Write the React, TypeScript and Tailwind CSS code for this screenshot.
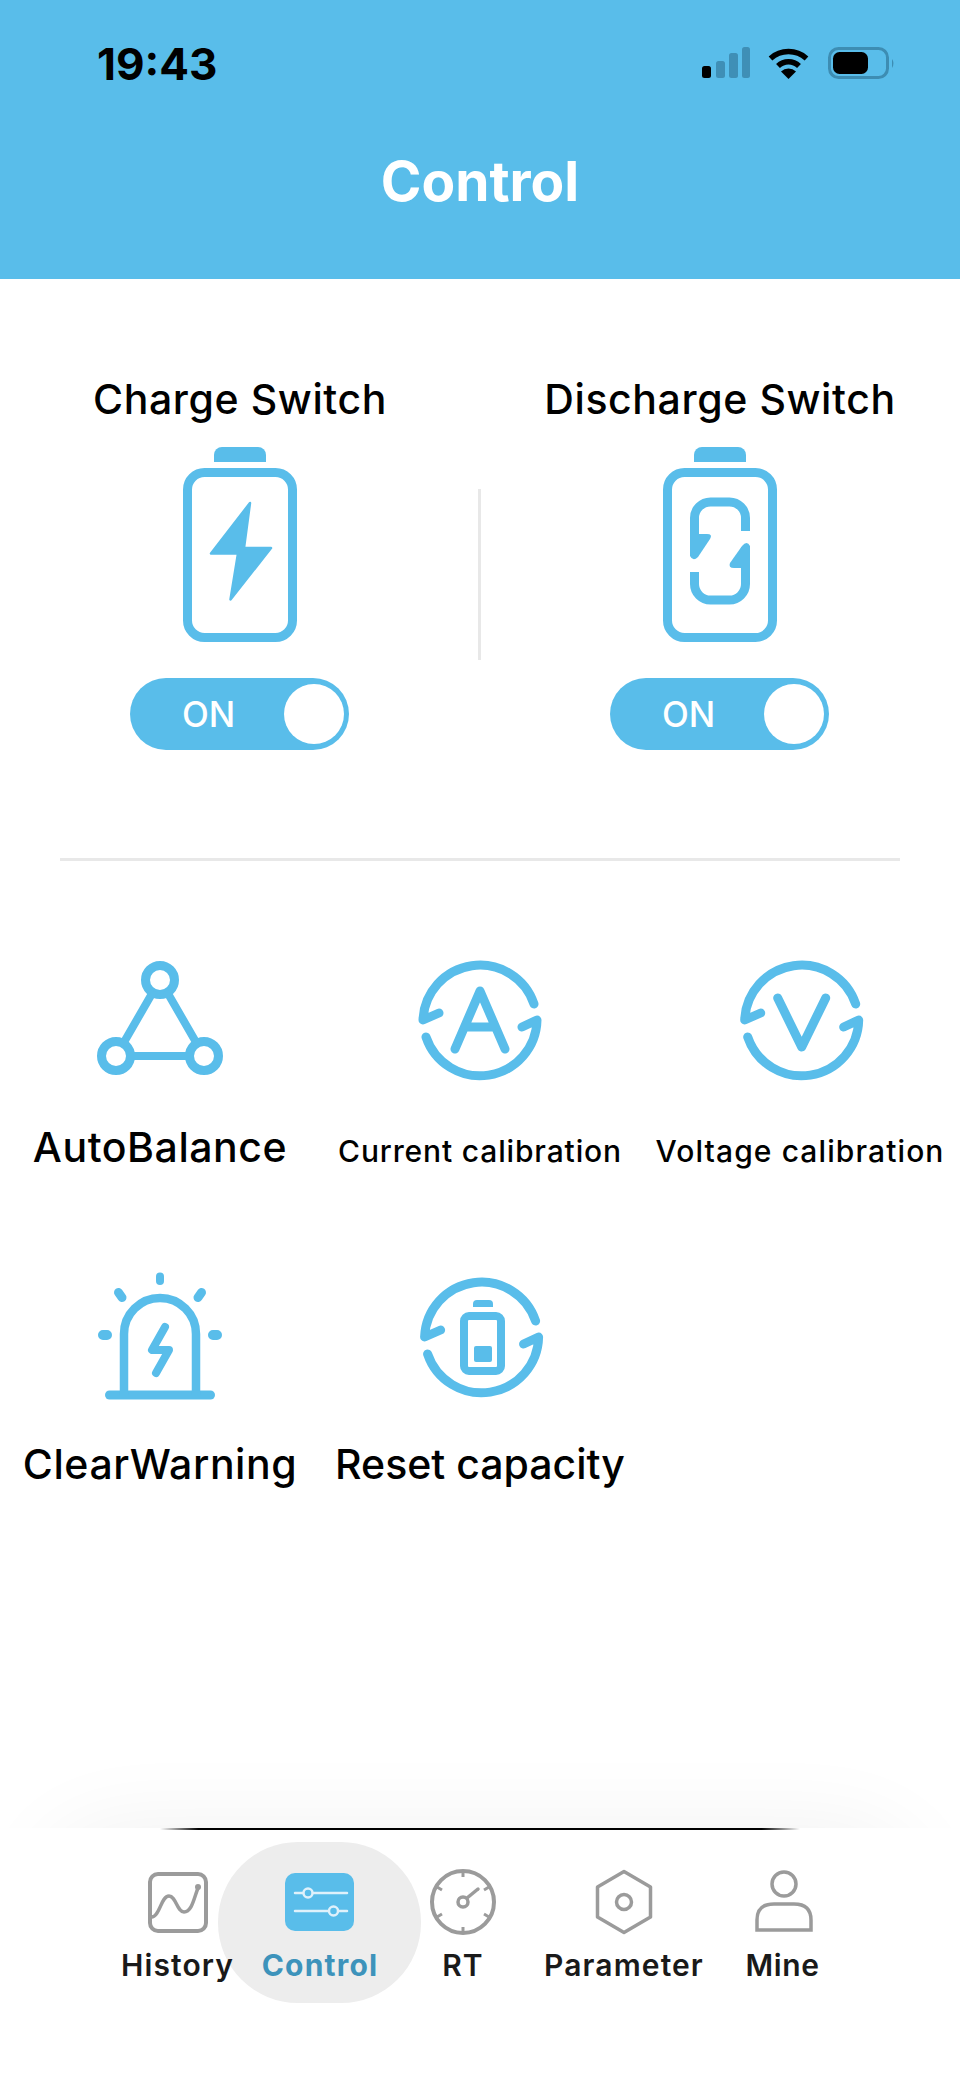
import React from "react";

const BLUE = "#59bdea";
const GRAY = "#9b9b9b";

function BatteryShell({ children }: { children?: React.ReactNode }) {
  return (
    <svg width="114" height="195" viewBox="0 0 114 195" fill="none">
      <path d="M31 15V8a8 8 0 0 1 8-8h36a8 8 0 0 1 8 8v7Z" fill={BLUE} />
      <rect x="4.5" y="25.5" width="105" height="165" rx="17" stroke={BLUE} strokeWidth="9" />
      {children}
    </svg>
  );
}

function ChargeBattery() {
  return (
    <BatteryShell>
      <path
        d="M67 56 L28 106.5 H55 L47.5 152.5 L88 101 H61 Z"
        fill={BLUE}
        stroke={BLUE}
        strokeWidth="2.5"
        strokeLinejoin="round"
      />
    </BatteryShell>
  );
}

function DischargeBattery() {
  return (
    <BatteryShell>
      <path
        d="M82.5 84 V71 A16 16 0 0 0 66.5 55 H47.5 A16 16 0 0 0 31.5 71 V108"
        stroke={BLUE}
        strokeWidth="9"
      />
      <path d="M36 87 H44 Q50 87 47 92 L35 110 Q30 115 27 109 V87 Z" fill={BLUE} />
      <path
        d="M31.5 125 V137 A16 16 0 0 0 47.5 153 H66.5 A16 16 0 0 0 82.5 137 V100"
        stroke={BLUE}
        strokeWidth="9"
      />
      <path d="M78 121 H71 Q65 121 67 116 L79 99 Q84 93 87 99 V121 Z" fill={BLUE} />
    </BatteryShell>
  );
}

function Toggle() {
  return (
    <div className="mr-[1px] flex h-[72px] w-[219px] items-center rounded-full bg-[#59bdea] pl-[52px] pr-[5px]">
      <span className="flex-1 text-[35px] font-medium leading-none text-white">ON</span>
      <span className="h-[60px] w-[60px] rounded-full bg-white" />
    </div>
  );
}

function SwitchColumn({ title, children }: { title: string; children: React.ReactNode }) {
  return (
    <div className="flex flex-col items-center">
      <div className="h-[48px] whitespace-nowrap text-[41px] font-medium leading-[48px] tracking-[0.6px] text-black">
        {title}
      </div>
      <div className="mt-[24px]">{children}</div>
      <div className="mt-[36px]">
        <Toggle />
      </div>
    </div>
  );
}

function Svg130({ children }: { children: React.ReactNode }) {
  return (
    <svg
      width="130"
      height="130"
      viewBox="-65 -65 130 130"
      fill="none"
      stroke={BLUE}
      strokeWidth="9"
      strokeLinecap="round"
      strokeLinejoin="round"
    >
      {children}
    </svg>
  );
}

function Arcs({ dx = 0 }: { dx?: number }) {
  return (
    <g transform={`translate(${dx} 0)`}>
      <path d="M54 -16 A57 57 0 0 0 -57 0 L-41 -7" />
      <path d="M-54 17 A57 57 0 0 0 57 0 L42 7" />
    </g>
  );
}

function AutoBalanceIcon() {
  return (
    <Svg130>
      <circle cx="0" cy="-40" r="14.5" />
      <circle cx="-44" cy="36" r="14.5" />
      <circle cx="44" cy="36" r="14.5" />
      <path d="M-6.5 -29 L-37.5 24.8 M6.5 -29 L37.5 24.8 M-31 36 H31" strokeLinecap="butt" strokeWidth="8" />
    </Svg130>
  );
}

function CurrentIcon() {
  return (
    <Svg130>
      <Arcs />
      <path d="M-25 29 L0 -29 L25 29 M-14 7 H14" />
    </Svg130>
  );
}

function VoltageIcon() {
  return (
    <Svg130>
      <Arcs dx={1.7} />
      <path d="M-22.3 -22 L1.7 27 L25.7 -22" />
    </Svg130>
  );
}

function AlertIcon() {
  return (
    <Svg130>
      <path d="M-50.5 58 H50.5" />
      <path d="M-36 58 V-3 A36 36 0 0 1 36 -3 V58" strokeLinecap="butt" strokeWidth="8.5" />
      <path d="M0 -60.5 V-56" strokeWidth="8" />
      <path d="M-41.5 -44.5 L-38 -39.5 M41.5 -44.5 L38 -39.5" strokeWidth="9" />
      <path d="M-57 -2 H-53 M53 -2 H57" strokeWidth="10" />
      <path d="M5 -10 L-8 13 H9 L-4 36" strokeWidth="8" />
    </Svg130>
  );
}

function ResetIcon() {
  return (
    <Svg130>
      <Arcs dx={1.6} />
      <rect x="-16" y="-21" width="37" height="55" rx="5" strokeWidth="8" />
      <path d="M-7 -30 V-33 a4 4 0 0 1 4 -4 H9 a4 4 0 0 1 4 4 V-30 Z" fill={BLUE} stroke="none" />
      <rect x="-6" y="9" width="18" height="16" rx="2" fill={BLUE} stroke="none" />
    </Svg130>
  );
}

function Action({
  label,
  icon,
  labelClass,
}: {
  label: string;
  icon: React.ReactNode;
  labelClass: string;
}) {
  return (
    <div className="flex flex-col items-center">
      {icon}
      <div className={labelClass}>{label}</div>
    </div>
  );
}

const bigLabel = "mt-[38px] h-[48px] whitespace-nowrap text-[41px] font-medium leading-[48px] tracking-[0.55px] text-black";
const resetLabel = "mt-[38px] h-[48px] whitespace-nowrap text-[41px] font-medium leading-[48px] text-black";
const currentLabel =
  "mt-[38px] h-[48px] whitespace-nowrap pt-[4px] text-[30px] font-medium leading-[48px] tracking-[0.85px] text-black";
const voltageLabel =
  "mt-[38px] h-[48px] whitespace-nowrap pt-[4px] text-[30px] font-medium leading-[48px] tracking-[1.1px] text-black";

function TabSvg({ children }: { children: React.ReactNode }) {
  return (
    <svg
      width="72"
      height="70"
      viewBox="-36 -35 72 70"
      fill="none"
      stroke={GRAY}
      strokeWidth="3.5"
      strokeLinecap="round"
      strokeLinejoin="round"
    >
      {children}
    </svg>
  );
}

function HistoryIcon() {
  return (
    <TabSvg>
      <rect x="-28" y="-28" width="56" height="57" rx="8" strokeWidth="4" />
      <path d="M-26 15 C-18 14 -17 -6 -9 -6 C-2 -6 -1 10 6 10 C14 10 16 -4 20 -14" strokeWidth="3.5" />
      <circle cx="20" cy="-15" r="3" fill={GRAY} stroke="none" />
    </TabSvg>
  );
}

function ControlIcon() {
  return (
    <svg width="72" height="70" viewBox="-36 -35 72 70" fill="none">
      <rect x="-35" y="-29" width="69" height="58" rx="10" fill={BLUE} />
      <path d="M-25 -9 H27 M-25 9 H27" stroke="#dff1fb" strokeWidth="2.5" strokeLinecap="round" />
      <circle cx="-12" cy="-9" r="4.5" fill={BLUE} stroke="#dff1fb" strokeWidth="2.5" />
      <circle cx="13.5" cy="9" r="4.5" fill={BLUE} stroke="#dff1fb" strokeWidth="2.5" />
    </svg>
  );
}

function GaugeIcon() {
  return (
    <TabSvg>
      <circle cx="0" cy="0" r="31" strokeWidth="4" />
      <path d="M0 -31 V-25 M0 31 V25 M-26 -15 L-21 -12 M26 -15 L21 -12 M-26 15 L-21 12 M26 15 L21 12" strokeWidth="3" strokeLinecap="butt" />
      <circle cx="0" cy="0" r="5" strokeWidth="3.5" />
      <path d="M4 -4 L15 -13" strokeWidth="3.5" />
    </TabSvg>
  );
}

function HexIcon() {
  return (
    <TabSvg>
      <path d="M0 -30.5 L26.5 -15 V15 L0 30.5 L-26.5 15 V-15 Z" />
      <circle cx="0" cy="0" r="7.5" />
    </TabSvg>
  );
}

function MineIcon() {
  return (
    <TabSvg>
      <circle cx="0" cy="-18" r="12" />
      <path d="M-27 28 V18 Q-27 2 -10 2 H10 Q27 2 27 18 V28 Z" strokeLinejoin="miter" />
    </TabSvg>
  );
}

function Tab({
  label,
  icon,
  widthClass,
  labelClass,
}: {
  label: string;
  icon: React.ReactNode;
  widthClass: string;
  labelClass: string;
}) {
  return (
    <div className={`relative flex flex-col items-center ${widthClass}`}>
      {icon}
      <div className={labelClass}>{label}</div>
    </div>
  );
}

const tabLabel = "mt-[8px] whitespace-nowrap text-[30px] font-semibold leading-[40px] tracking-[1.1px] text-[#1a1a1a]";
const activeLabel = "mt-[8px] whitespace-nowrap text-[30px] font-bold leading-[40px] tracking-[1.2px] text-[#3d93bb]";
const mineLabel = "mr-[3px] mt-[8px] whitespace-nowrap text-[30px] font-semibold leading-[40px] tracking-[0.6px] text-[#1a1a1a]";

function StatusIcons() {
  return (
    <div className="flex items-center">
      <svg width="48" height="32" viewBox="0 0 48 32">
        <rect x="0" y="19" width="9" height="12" rx="2.5" fill="#000" />
        <rect x="14" y="14" width="9" height="17" rx="2.5" fill="#3f8fb6" />
        <rect x="27" y="6" width="9" height="25" rx="2.5" fill="#3f8fb6" />
        <rect x="40" y="0" width="8" height="31" rx="2.5" fill="#3f8fb6" />
      </svg>
      <svg className="ml-[18px]" width="41" height="32" viewBox="0 0 41 32" fill="none">
        <path d="M2.5 11.5 A27 27 0 0 1 38.5 11.5" stroke="#000" strokeWidth="5.5" />
        <path d="M10 19 A15 15 0 0 1 31 19" stroke="#000" strokeWidth="5.5" />
        <path d="M20.5 32 L13 24.5 A11 11 0 0 1 28 24.5 Z" fill="#000" />
      </svg>
      <svg className="ml-[19px]" width="67" height="32" viewBox="0 0 67 32" fill="none">
        <rect x="1.5" y="1.5" width="58" height="29" rx="9" stroke="#3d8db3" strokeWidth="3" />
        <rect x="5" y="5" width="35" height="22" rx="6.5" fill="#000" />
        <path d="M64 12 Q67 16 64 21 Z" fill="#3d8db3" />
      </svg>
    </div>
  );
}

export default function App() {
  return (
    <div className="flex h-[2079px] w-[960px] flex-col overflow-hidden bg-white [font-family:Inter,sans-serif]">
      <header className="flex h-[279px] shrink-0 flex-col bg-[#59bdea]">
        <div className="mt-[47px] flex h-[32px] items-center justify-between pl-[97px] pr-[65px]">
          <span className="pt-[2px] text-[44px] font-bold leading-none text-black">19:43</span>
          <StatusIcons />
        </div>
        <h1 className="mt-[72px] text-center text-[55px] font-bold leading-[60px] text-white">Control</h1>
      </header>

      <section className="grid grid-cols-[480px_0px_480px] pt-[96px]">
        <SwitchColumn title="Charge Switch">
          <ChargeBattery />
        </SwitchColumn>
        <div className="-ml-[2px] mt-[114px] h-[171px] w-[3px] bg-[#e8e8e8]" />
        <SwitchColumn title="Discharge Switch">
          <DischargeBattery />
        </SwitchColumn>
      </section>

      <div className="mx-[60px] mt-[108px] h-[3px] shrink-0 bg-[#e8e8e8]" />

      <section className="grid grid-cols-3 gap-y-[101px] pt-[94px]">
        <Action label="AutoBalance" icon={<AutoBalanceIcon />} labelClass={bigLabel} />
        <Action label="Current calibration" icon={<CurrentIcon />} labelClass={currentLabel} />
        <Action label="Voltage calibration" icon={<VoltageIcon />} labelClass={voltageLabel} />
        <Action label="ClearWarning" icon={<AlertIcon />} labelClass={bigLabel} />
        <Action label="Reset capacity" icon={<ResetIcon />} labelClass={resetLabel} />
      </section>

      <div className="min-h-0 flex-1" />

      <div className="h-[89px] shrink-0 overflow-hidden">
        <div className="mx-[40px] mt-[89px] h-[160px] rounded-full shadow-[0_0_90px_rgba(0,0,0,0.06)]" />
      </div>
      <div className="mx-[160px] h-[2px] shrink-0 bg-[linear-gradient(90deg,transparent_0%,#000_6%,#000_94%,transparent_100%)]" />

      <nav className="relative h-[249px] shrink-0 pl-[106px] pt-[37px]">
        <div className="absolute left-[218px] top-[12px] h-[161px] w-[203px] rounded-[80px] bg-[#ededed]" />
        <div className="flex">
          <Tab label="History" icon={<HistoryIcon />} widthClass="w-[143px]" labelClass={tabLabel} />
          <Tab label="Control" icon={<ControlIcon />} widthClass="w-[142px]" labelClass={activeLabel} />
          <Tab label="RT" icon={<GaugeIcon />} widthClass="w-[144px]" labelClass={tabLabel} />
          <Tab label="Parameter" icon={<HexIcon />} widthClass="w-[178px]" labelClass={tabLabel} />
          <Tab label="Mine" icon={<MineIcon />} widthClass="w-[142px]" labelClass={mineLabel} />
        </div>
      </nav>
    </div>
  );
}
